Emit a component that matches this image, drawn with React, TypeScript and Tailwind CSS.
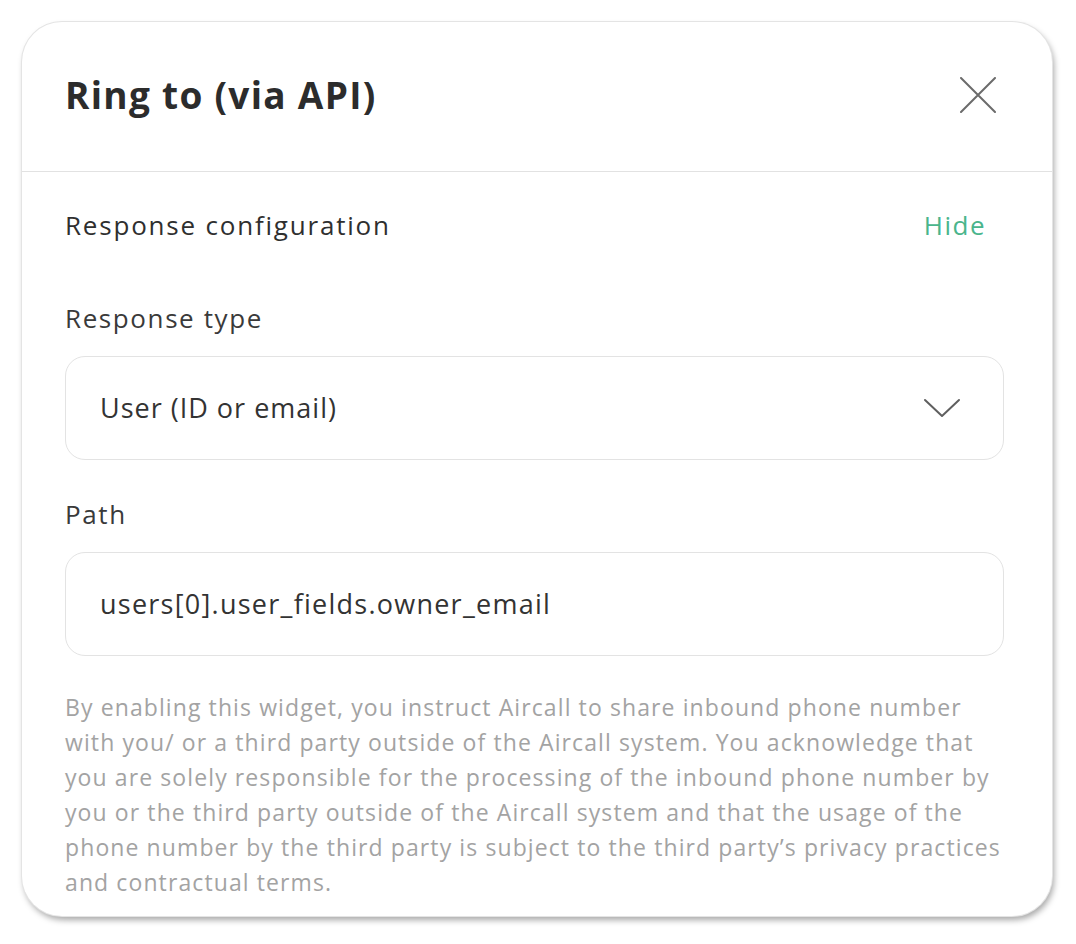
export default function App() {
  return (
    <div className="min-h-screen bg-white p-[22px] font-['Open_Sans','Liberation_Sans',sans-serif]">
      <div className="flex h-[894px] w-[1030px] flex-col overflow-hidden rounded-[40px] bg-white shadow-[2px_4px_6px_rgba(0,0,0,0.35)] ring-1 ring-[#e4e4e4]">
        {/* header */}
        <div className="flex h-[150px] items-center justify-between border-b border-[#e2e2e2] pb-[3px] pl-[43px] pr-[56px]">
          <h1 className="text-[37px] font-bold tracking-[1.3px] text-[#2c2c2c]">Ring to (via API)</h1>
          <button className="text-[#6b6b6b]">
            <svg width="36" height="36" viewBox="0 0 36 36" fill="none" stroke="currentColor" strokeWidth="2" strokeLinecap="round">
              <path d="M1 1L35 35M35 1L1 35" />
            </svg>
          </button>
        </div>
        {/* body */}
        <div className="flex flex-col pl-[43px] pr-[48px] pt-[34px]">
          <div className="flex items-center justify-between">
            <p className="text-[26px] tracking-[1.8px] text-[#2f2f2f]">Response configuration</p>
            <button className="mr-[18px] text-[26px] tracking-[1.5px] text-[#4ab58c]">Hide</button>
          </div>
          <label className="mt-[54px] text-[26px] tracking-[1.6px] text-[#3a3a3a]">Response type</label>
          <div className="mt-[18px] flex h-[104px] items-center justify-between rounded-[20px] border border-[#e3e3e3] pl-[34px] pr-[42px]">
            <span className="text-[27px] tracking-[1px] text-[#333]">User (ID or email)</span>
            <svg width="38" height="20" viewBox="0 0 38 20" fill="none" stroke="#5f5f5f" strokeWidth="2" strokeLinecap="round" strokeLinejoin="round">
              <path d="M2 2L19 18L36 2" />
            </svg>
          </div>
          <label className="mt-[35px] text-[26px] tracking-[1.6px] text-[#3a3a3a]">Path</label>
          <div className="mt-[18px] flex h-[104px] items-center rounded-[20px] border border-[#e3e3e3] pl-[34px]">
            <span className="text-[27px] tracking-[1.25px] text-[#333]">users[0].user_fields.owner_email</span>
          </div>
          <p className="mt-[34px] text-[23px] leading-[35px] tracking-[1.1px] text-[#a3a3a3]">
            By enabling this widget, you instruct Aircall to share inbound phone number with you/ or a third
            party outside of the Aircall system. You acknowledge that you are solely responsible for the
            processing of the inbound phone number by you or the third party outside of the Aircall system and
            that the usage of the phone number by the third party is subject to the third party’s privacy
            practices and contractual terms.
          </p>
        </div>
      </div>
    </div>
  );
}
